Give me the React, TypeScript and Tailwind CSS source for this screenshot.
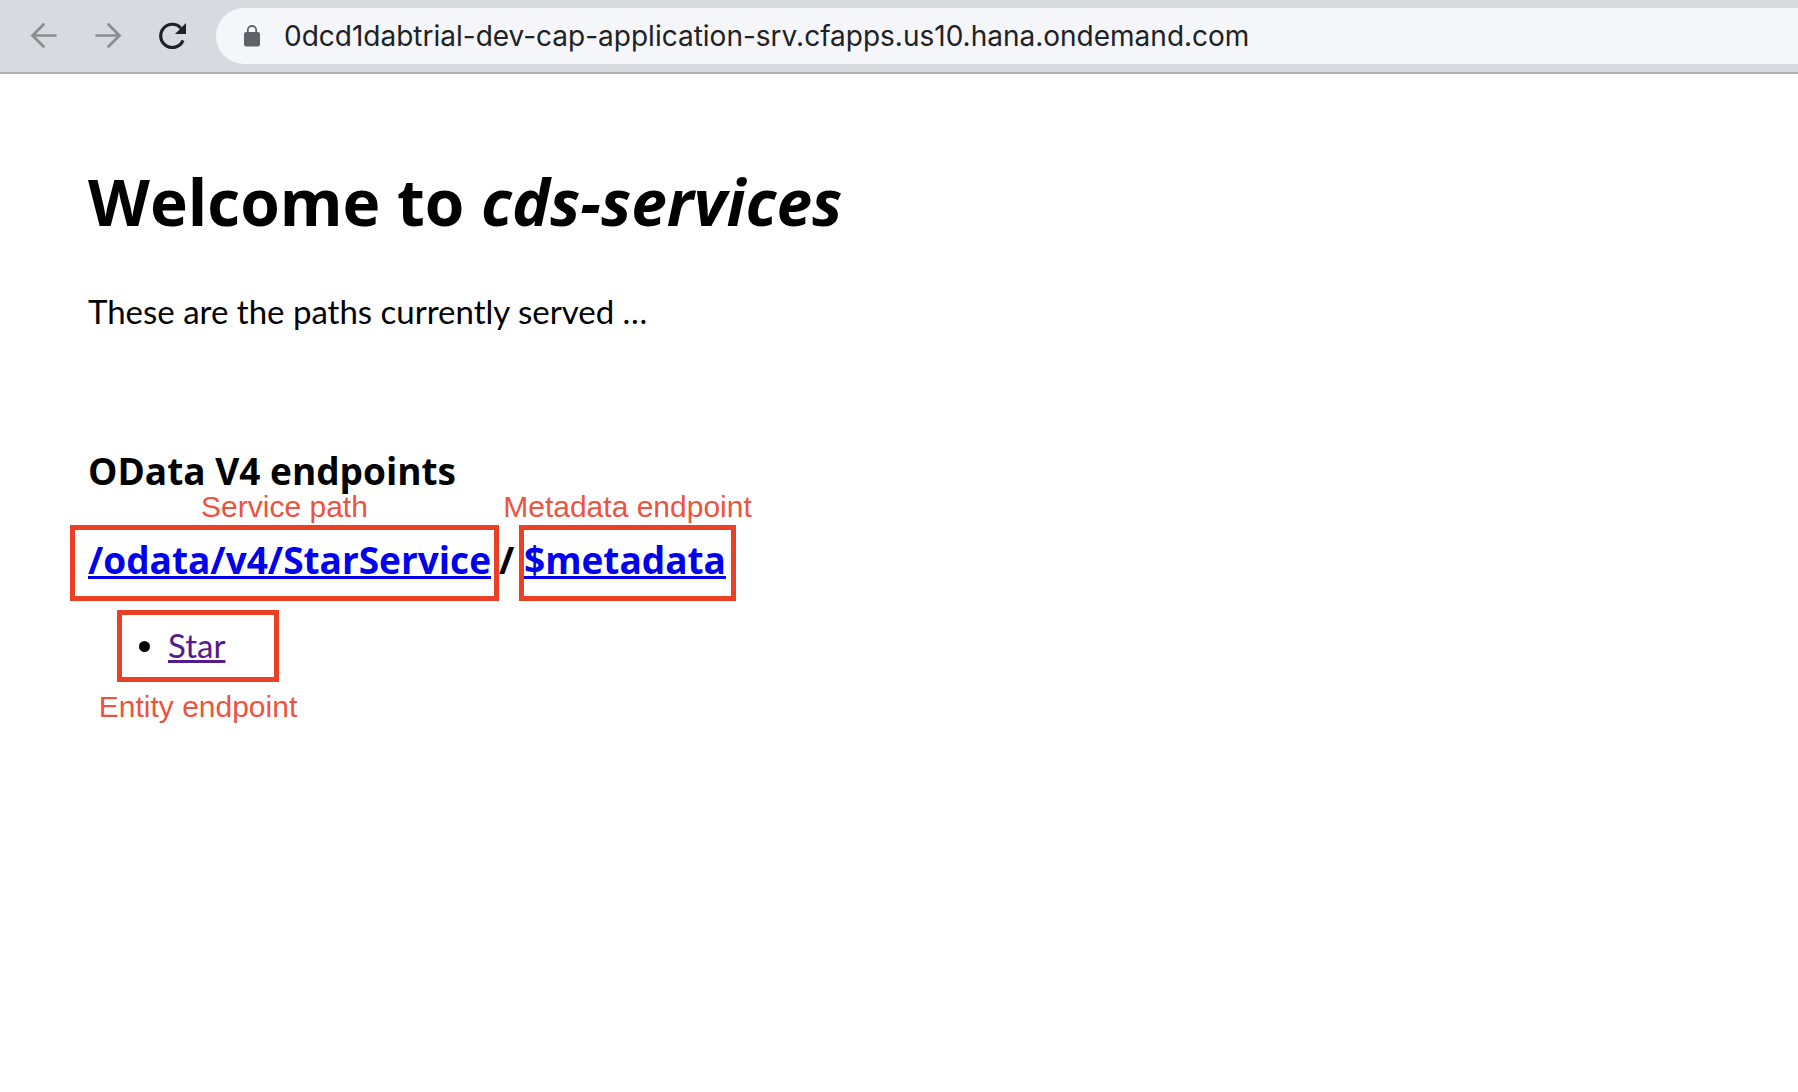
import React from "react";
import type { ReactNode } from "react";

function Toolbar() {
  return (
    <header className="flex h-[74px] items-center border-b-2 border-[#afb0b4] bg-[#d9dadf] pl-7">
      <button type="button" aria-label="Back" className="mr-8 size-8 text-[#8b8c8f]">
        <svg viewBox="0 0 32 32" className="size-8" fill="none" stroke="currentColor" strokeWidth="2.7" strokeLinecap="round">
          <path d="M27.5 15.5H5M15.5 4.5L4.5 15.5L15.5 26.5" />
        </svg>
      </button>
      <button type="button" aria-label="Forward" className="mr-8 size-8 text-[#8b8c8f]">
        <svg viewBox="0 0 32 32" className="size-8" fill="none" stroke="currentColor" strokeWidth="2.7" strokeLinecap="round">
          <path d="M4.5 15.5H27M16.5 4.5L27.5 15.5L16.5 26.5" />
        </svg>
      </button>
      <button type="button" aria-label="Reload" className="mr-7 size-8 text-[#202124]">
        <svg viewBox="0 0 32 32" className="size-8">
          <path d="M27 20.3A11.6 11.6 0 1 1 25 8.2" fill="none" stroke="currentColor" strokeWidth="3.2" />
          <path d="M30 3V14H19Z" fill="currentColor" />
        </svg>
      </button>
      <div className="flex h-14 min-w-0 flex-1 items-center rounded-l-full bg-[#f5f6f9] pl-7">
        <svg viewBox="0 0 16 22" className="mr-6 h-[22px] w-4 shrink-0" aria-hidden="true">
          <rect x="0" y="7" width="16" height="14.5" rx="2.2" fill="#5f6368" />
          <path d="M3.8 8V5.2a4.2 4.2 0 0 1 8.4 0V8" fill="none" stroke="#5f6368" strokeWidth="1.8" />
        </svg>
        <input
          type="text"
          aria-label="Address"
          defaultValue="0dcd1dabtrial-dev-cap-application-srv.cfapps.us10.hana.ondemand.com"
          className="h-10 min-w-0 flex-1 bg-transparent font-['Inter',sans-serif] text-[28px] text-[#202124] outline-none"
        />
      </div>
    </header>
  );
}

function Note({ children }: { children: ReactNode }) {
  return (
    <span className="whitespace-nowrap font-['Liberation_Sans',sans-serif] text-[30px] font-normal leading-9 text-[#ed5340]">
      {children}
    </span>
  );
}

export default function App() {
  return (
    <div className="min-h-screen bg-white font-['Lato',sans-serif] text-black">
      <Toolbar />
      <main className="px-[70px] pt-22">
        <h1 className="pl-[18px] font-['Open_Sans',sans-serif] text-[64px] font-bold leading-[80px]">
          Welcome to <em>cds-services</em>
        </h1>
        <p className="mt-[45px] pl-[18px] text-[33px] leading-[48px]">These are the paths currently served …</p>
        <h2 className="mt-[118px] pl-[18px] font-['Open_Sans',sans-serif] text-[37px] font-bold leading-9">
          OData V4 endpoints
        </h2>
        <h3 className="flex items-end font-['Open_Sans',sans-serif] text-[37px] font-bold leading-[48px]">
          <span className="flex w-[429px] flex-col items-center">
            <Note>Service path</Note>
            <span className="h-[76px] w-full whitespace-nowrap border-[5px] border-[#ea4025] pl-[13px] pt-[6px]">
              <a href="#service" className="text-[#0000ee] underline decoration-[3px]">
                /odata/v4/StarService
              </a>
            </span>
          </span>
          <span className="h-[65px] w-5">/</span>
          <span className="flex w-[217px] flex-col items-center">
            <Note>Metadata endpoint</Note>
            <span className="h-[76px] w-full whitespace-nowrap border-[5px] border-[#ea4025] pt-[6px]">
              <a href="#metadata" className="text-[#0000ee] underline decoration-[3px]">
                $metadata
              </a>
            </span>
          </span>
        </h3>
        <div className="ml-[47px] mt-[9px] flex w-[162px] flex-col items-center gap-[7px]">
          <ul className="h-[72px] w-full list-disc border-[5px] border-[#ea4025] pl-[46px] pt-[6px] text-[33px] leading-[48px]">
            <li>
              <a href="#star" className="text-[#551a8b] underline decoration-[3px]">
                Star
              </a>
            </li>
          </ul>
          <Note>Entity endpoint</Note>
        </div>
      </main>
    </div>
  );
}
